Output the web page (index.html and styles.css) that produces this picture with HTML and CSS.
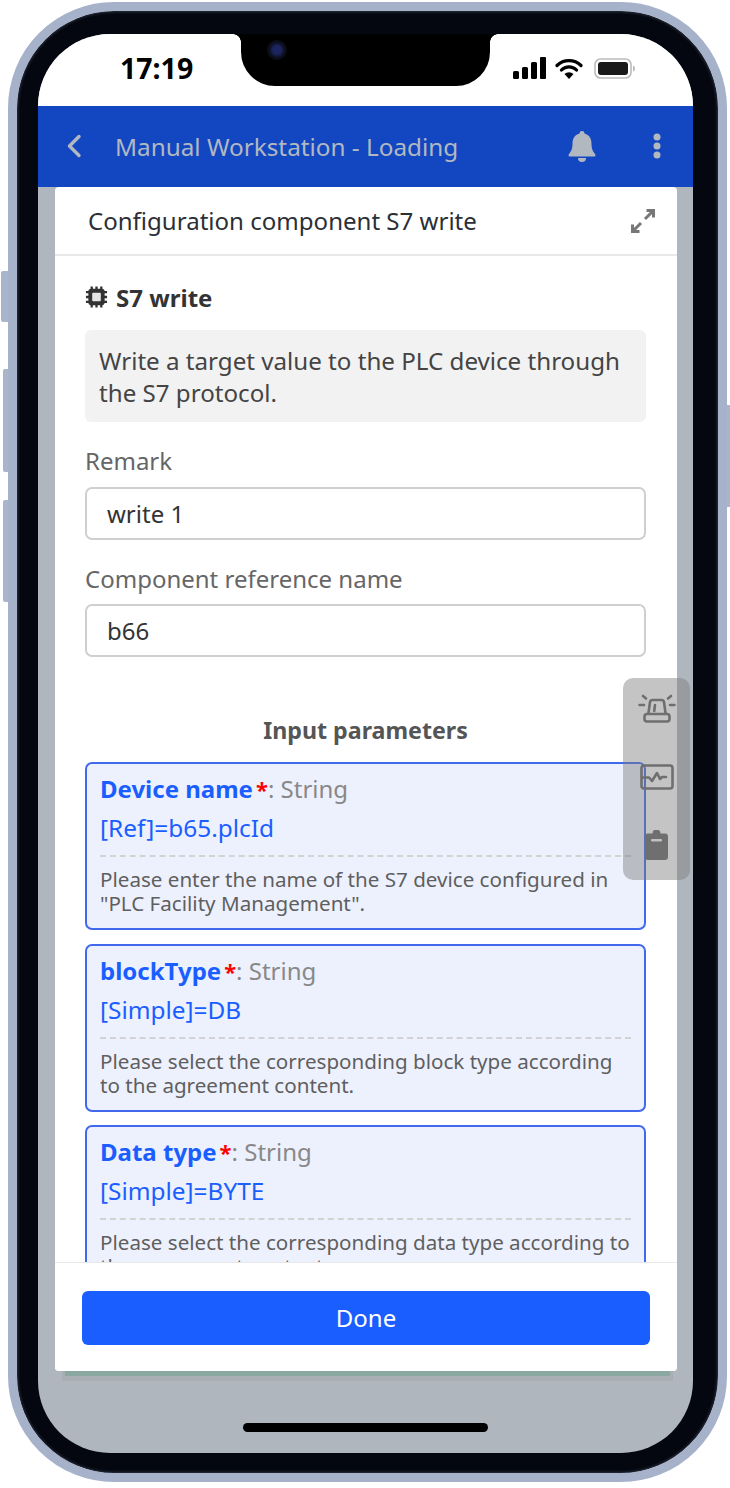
FILE: index.html
```html
<!DOCTYPE html>
<html lang="en">
<head>
<meta charset="utf-8">
<title>S7 write</title>
<link rel="stylesheet" href="styles.css">
</head>
<body>
<div class="phone">
  <i class="side-btn btn-a"></i><i class="side-btn btn-b"></i><i class="side-btn btn-c"></i><i class="side-btn btn-d"></i>
  <div class="bezel">
    <div class="screen">
      <div class="notch"><i class="speaker"></i><i class="camera"></i></div>
      <div class="status">
        <span class="time">17:19</span>
        <div class="status-icons">
          <svg width="33" height="22" viewBox="0 0 33 22"><rect x="0" y="14" width="6" height="8" rx="1.5"/><rect x="9" y="10" width="6" height="12" rx="1.5"/><rect x="18" y="5" width="6" height="17" rx="1.5"/><rect x="27" y="0" width="6" height="22" rx="1"/></svg>
          <svg width="28" height="21" viewBox="0 0 28 21"><path d="M2 7.500a17 17 0 0 1 24 0M6.500 12a10.500 10.500 0 0 1 15 0" fill="none" stroke="#000" stroke-width="3.200" stroke-linecap="round"/><path d="M14 21l-4.500-5a6.500 6.500 0 0 1 9 0z"/></svg>
          <svg width="42" height="21" viewBox="0 0 42 21"><rect x="1" y="1" width="36" height="19" rx="5.500" fill="#fff" stroke="#bbb" stroke-width="1.600"/><rect x="4" y="4" width="30" height="13" rx="3" fill="#191919"/><path d="M39 7.500c1.500.5 2 1.700 2 3s-.5 2.500-2 3z" fill="#bbb"/></svg>
        </div>
      </div>
      <header class="appbar">
        <svg class="back" width="16" height="24" viewBox="0 0 16 24"><path d="M13 2.500L3.500 12l9.500 9.500" fill="none" stroke="#b2b8c0" stroke-width="3.400" stroke-linecap="round" stroke-linejoin="round"/></svg>
        <span class="appbar-title">Manual Workstation - Loading</span>
        <svg class="bell" width="28" height="31" viewBox="0 0 28 31"><path d="M14 0a2.500 2.500 0 0 1 2.500 2.600C21.500 4 23.500 8 23.500 13c0 5 1.500 7.500 3.500 10 .8 1.100.5 2.500-1 2.500H2c-1.500 0-1.800-1.400-1-2.500 2-2.500 3.500-5 3.500-10 0-5 2-9 7-10.400A2.500 2.500 0 0 1 14 0z"/><path d="M10 27h8a4 4 0 0 1-8 0z"/></svg>
        <svg class="dots" width="10" height="26" viewBox="0 0 10 26"><circle cx="5" cy="4" r="3.500"/><circle cx="5" cy="13" r="3.500"/><circle cx="5" cy="22" r="3.500"/></svg>
      </header>
      <div class="overlay">
        <i class="peek"></i>
        <section class="modal">
          <div class="modal-head">
            <h1>Configuration component S7 write</h1>
            <svg width="24" height="24" viewBox="0 0 24 24"><g fill="none" stroke="#777" stroke-width="3"><path d="M14 10l8-8M15.500 1.500h7V8.500"/><path d="M10 14l-8 8M8.500 22.500h-7V15.500"/></g></svg>
          </div>
          <div class="modal-body">
            <div class="comp-name">
              <svg width="23" height="24" viewBox="0 0 24 24"><path d="M7 1v22M12 1v22M17 1v22M1 7h22M1 12h22M1 17h22" stroke="#333" stroke-width="2.400"/><rect x="3.500" y="3.500" width="17" height="17" rx="3" fill="#333"/><rect x="7.500" y="7.500" width="9" height="9" rx="1" fill="#e6e6e6"/></svg>
              <span>S7 write</span>
            </div>
            <p class="desc">Write a target value to the PLC device through the S7 protocol.</p>
            <label class="field-label">Remark</label>
            <div class="input">write 1</div>
            <label class="field-label second">Component reference name</label>
            <div class="input">b66</div>
            <h2>Input parameters</h2>
            <article class="param">
              <div class="param-title"><b>Device name</b><em>*</em>: String</div>
              <div class="param-value">[Ref]=b65.plcId</div>
              <p>Please enter the name of the S7 device configured in "PLC Facility Management".</p>
            </article>
            <article class="param">
              <div class="param-title"><b>blockType</b><em>*</em>: String</div>
              <div class="param-value">[Simple]=DB</div>
              <p>Please select the corresponding block type according to the agreement content.</p>
            </article>
            <article class="param">
              <div class="param-title"><b>Data type</b><em>*</em>: String</div>
              <div class="param-value">[Simple]=BYTE</div>
              <p>Please select the corresponding data type according to the agreement content.</p>
            </article>
          </div>
          <div class="modal-foot"><button class="done">Done</button></div>
        </section>
        <i class="home"></i>
      </div>
      <aside class="float-panel">
        <svg width="38" height="30" viewBox="0 0 38 30"><g fill="none" stroke="#6f6f6f" stroke-width="2.600" stroke-linecap="round"><path d="M10.500 19l1.500-11a2.500 2.500 0 0 1 2.500-2h9A2.500 2.500 0 0 1 26 8l1.500 11"/><rect x="6.500" y="20" width="25" height="7.500" rx="2.500"/><path d="M17 11l-.8 6M1.500 11h4.500M32 11h4.500M5 2l3 2.500M33 2l-3 2.500"/></g></svg>
        <svg width="34" height="26" viewBox="0 0 34 26"><g fill="none" stroke="#6f6f6f" stroke-width="2.600" stroke-linejoin="round" stroke-linecap="round"><rect x="1.500" y="1.500" width="31" height="23" rx="2.500"/><path d="M2 13.500h7l3 3.500 5-8 3 6 2-2h4"/></g></svg>
        <svg width="23" height="30" viewBox="0 0 23 30"><path fill="#6f6f6f" d="M7.500 3.500a4 4 0 0 1 8 0H20a3 3 0 0 1 3 3V27a3 3 0 0 1-3 3H3a3 3 0 0 1-3-3V6.500a3 3 0 0 1 3-3z"/><rect x="6" y="9" width="11" height="2.400" rx="1" fill="#c0c0c0"/></svg>
      </aside>
    </div>
  </div>
</div>
</body>
</html>
```
FILE: styles.css
```css
* { box-sizing: border-box; }
html, body { margin: 0; padding: 0; background: #fff; }
body { width: 730px; height: 1488px; overflow: hidden; font-family: "Noto Sans", "Open Sans", sans-serif; }

.phone { position: relative; width: 719px; height: 1480px; margin: 2px 0 0 8px; }
.side-btn { position: absolute; background: #a9b5cb; border-radius: 2px 0 0 2px; }
.btn-a { left: -7px; top: 269px; width: 7px; height: 51px; }
.btn-b { left: -5px; top: 367px; width: 5px; height: 103px; }
.btn-c { left: -5px; top: 498px; width: 5px; height: 102px; }
.btn-d { left: 719px; top: 403px; width: 4px; height: 102px; border-radius: 0 2px 2px 0; }

.bezel {
  position: relative; width: 100%; height: 100%; padding: 23px 25px 20px 21px;
  background: #04070f; background-clip: padding-box; border: 9px solid #a6b2ca; border-radius: 106px;
  box-shadow: inset 0 0 3px 1px #2e3444;
}
.screen {
  position: relative; width: 655px; height: 1419px; overflow: hidden;
  border-radius: 72px; background: #b0b6be; display: flex; flex-direction: column;
}

.notch { position: absolute; top: 0; left: 203px; width: 249px; height: 52px; background: #000; border-radius: 0 0 34px 34px; z-index: 3; }
.notch::before, .notch::after { content: ""; position: absolute; top: 0; width: 8px; height: 8px; }
.notch::before { left: -8px; background: radial-gradient(circle at 0 100%, transparent 7.500px, #000 8px); }
.notch::after { right: -8px; background: radial-gradient(circle at 100% 100%, transparent 7.500px, #000 8px); }
.speaker { position: absolute; left: 71px; top: -22px; width: 108px; height: 13px; border-radius: 7px; background: #0b0b0c; border: 1px solid #1c1c1e; }
.camera { position: absolute; left: 26px; top: 6px; width: 20px; height: 20px; border-radius: 50%; background: radial-gradient(circle, #1c2560 0 4px, #0b0d18 8px); }

.status { height: 72px; flex: none; background: #fff; display: flex; align-items: center; justify-content: space-between; padding: 0 57px 4px 82px; }
.time { font-size: 28.500px; font-weight: 700; color: #000; font-family: "Noto Sans", sans-serif; letter-spacing: 0; }
.status-icons { display: flex; align-items: center; gap: 9px; }
.status-icons svg { display: block; }
.status-icons svg:last-child { margin-left: 2px; }

.appbar { height: 81px; flex: none; background: #1347c2; display: flex; align-items: center; padding: 0 31px 1px 28px; color: #b2b8c0; fill: #b2b8c0; }
.appbar .back { margin-right: 33px; }
.appbar-title { flex: 1; font-size: 24.300px; white-space: nowrap; }
.bell { margin-right: 56px; }

.overlay { position: relative; flex: 1; min-height: 0; padding: 0 16px 0 17px; display: flex; flex-direction: column; }
.peek { position: absolute; left: 27px; top: 1184px; width: 605px; height: 5px; background: #8aa89f; box-shadow: 0 2px 0 3px #a9adb4; }
.modal { position: relative; height: 1184px; flex: none; background: #fff; border-radius: 4px; display: flex; flex-direction: column; overflow: hidden; }
.modal-head { height: 69px; flex: none; padding: 0 22px 0 33px; border-bottom: 2px solid #e8e8e8; display: flex; align-items: center; justify-content: space-between; }
.modal-head h1 { margin: 0; font-size: 24.050px; font-weight: 400; color: #2b2f36; }
.modal-body { flex: 1; min-height: 0; overflow: hidden; padding: 25px 31px 0 30px; }
.comp-name { display: flex; align-items: center; gap: 8px; font-size: 24px; font-weight: 700; color: #333; height: 32px; }
.desc { margin: 17px 0 0; padding: 15px 14px 0; height: 92px; background: #f2f2f2; border-radius: 6px; font-size: 24.150px; line-height: 32px; color: #444; }
.field-label { display: block; font-size: 24px; line-height: 32px; color: #666; margin-top: 23px; }
.field-label.second { margin-top: 23px; }
.input { height: 53px; padding-left: 20px; border: 2px solid #cfcfcf; border-radius: 7px; font-size: 24px; line-height: 49px; color: #333; }
.field-label + .input { margin-top: 10px; }
.field-label.second + .input { margin-top: 9px; }
h2 { margin: 57px 0 16px; font-size: 23.200px; line-height: 32px; font-weight: 700; color: #555; text-align: center; }
.param { height: 168px; margin-bottom: 13.500px; padding: 8px 13px 0; background: #edf1fe; border: 2px solid #4169ee; border-radius: 7px; }
.param-title { font-size: 24px; line-height: 34px; color: #888; }
.param-title b { color: #1a5eff; font-weight: 700; }
.param-title em { color: #f00; font-style: normal; font-weight: 700; margin-left: 3px; font-size: 22px; }
.param-value { margin-top: 5px; padding-bottom: 10px; font-size: 24.400px; line-height: 34px; color: #1a5eff; border-bottom: 2px dashed #d2d2d2; }
.param p { margin: 10px -4px 0 0; font-size: 20.600px; line-height: 24px; color: #5f5f5f; }
.modal-foot { height: 109px; flex: none; border-top: 1px solid #e8e8e8; background: #fff; padding: 28px 27px 0; }
.done { display: block; width: 100%; height: 54px; border: 0; border-radius: 6px; background: #1a5eff; color: #fff; font: 400 24px "Noto Sans", sans-serif; padding-bottom: 3px; }

.home { position: absolute; left: 205px; top: 1236px; width: 245px; height: 9px; background: #000; border-radius: 5px; }

.float-panel { position: absolute; left: 585px; top: 644px; width: 67px; height: 202px; padding: 16px 0 20px; border-radius: 10px; background: rgba(120,120,120,.44); display: flex; flex-direction: column; align-items: center; justify-content: space-between; z-index: 2; }
.float-panel svg { display: block; }
```
